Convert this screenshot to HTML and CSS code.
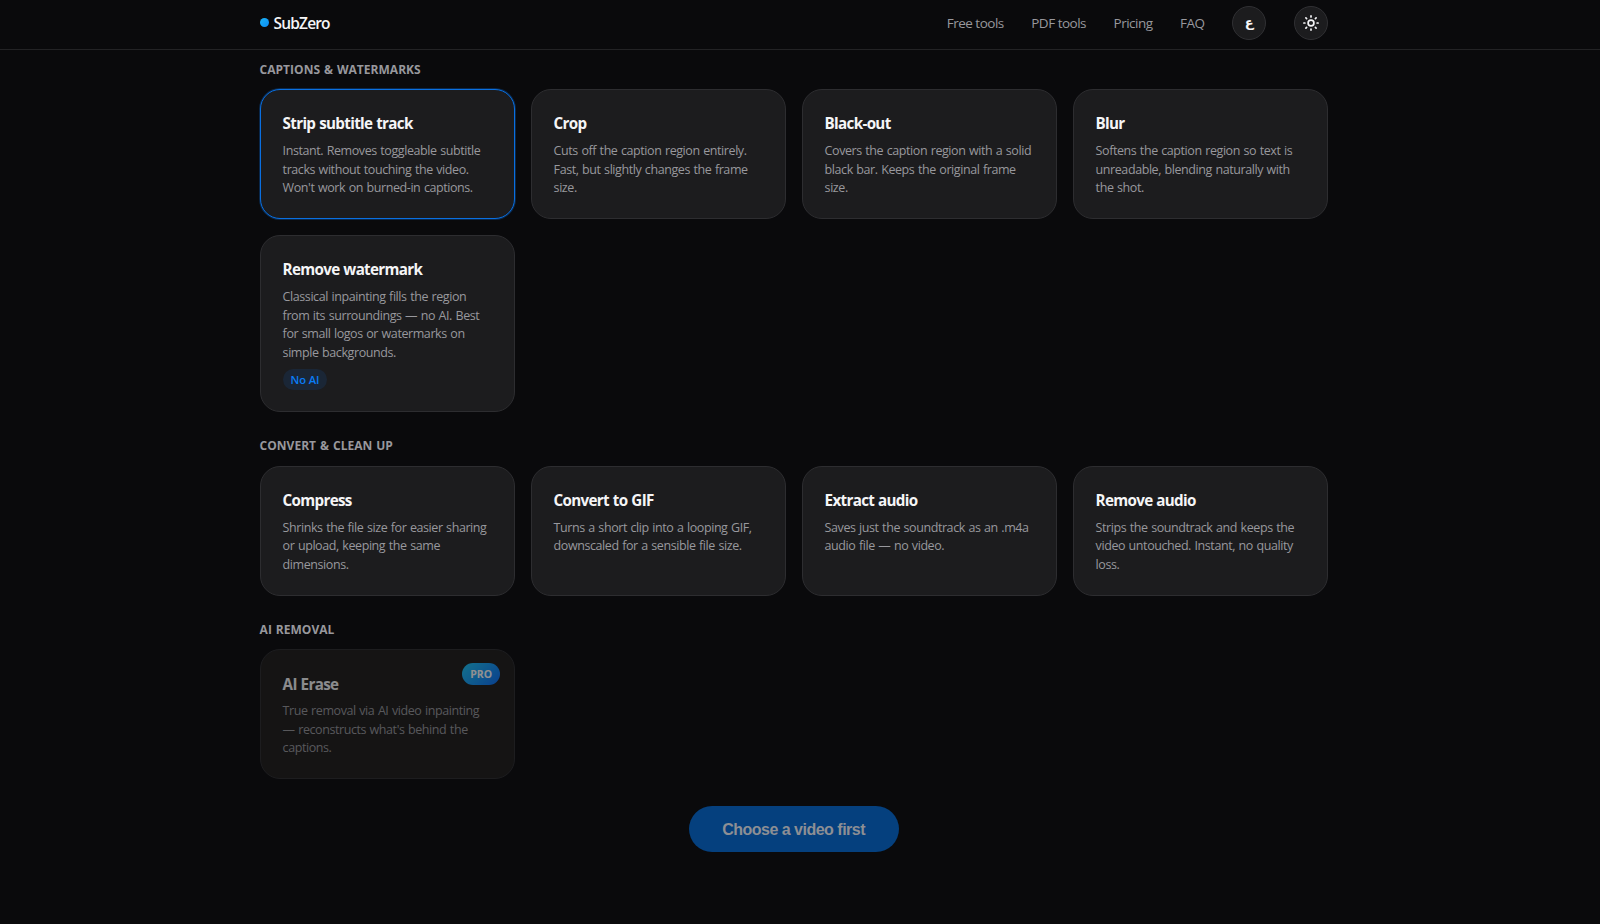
FILE: index.html
```html
<!DOCTYPE html>
<html lang="en">
<head>
<meta charset="utf-8">
<title>SubZero</title>
<link rel="stylesheet" href="styles.css">
</head>
<body>
<header class="header">
  <div class="header-inner">
    <a class="brand"><span class="brand-dot"></span><span class="brand-name">SubZero</span></a>
    <nav class="nav">
      <a>Free tools</a>
      <a>PDF tools</a>
      <a>Pricing</a>
      <a>FAQ</a>
      <button class="round lang" lang="ar">ع</button>
      <button class="round" aria-label="Theme">
        <svg width="16" height="16" viewBox="0 0 16 16" fill="none" stroke="#f5f5f7" stroke-width="1.7" stroke-linecap="round">
          <circle cx="8" cy="8" r="2.9"/>
          <path d="M8 .9v1M8 14.1v1M.9 8h1M14.1 8h1M2.9 2.9l.7.7M12.4 12.4l.7.7M2.9 13.1l.7-.7M12.4 3.6l.7-.7"/>
        </svg>
      </button>
    </nav>
  </div>
</header>
<main class="main">
  <h2 class="label">CAPTIONS &amp; WATERMARKS</h2>
  <div class="grid">
    <article class="card selected"><h3>Strip subtitle track</h3><p>Instant. Removes toggleable subtitle<br>tracks without touching the video.<br>Won't work on burned-in captions.</p></article>
    <article class="card"><h3>Crop</h3><p>Cuts off the caption region entirely.<br>Fast, but slightly changes the frame<br>size.</p></article>
    <article class="card"><h3>Black-out</h3><p>Covers the caption region with a solid<br>black bar. Keeps the original frame<br>size.</p></article>
    <article class="card"><h3>Blur</h3><p>Softens the caption region so text is<br>unreadable, blending naturally with<br>the shot.</p></article>
    <article class="card"><h3>Remove watermark</h3><p>Classical inpainting fills the region<br>from its surroundings — no AI. Best<br>for small logos or watermarks on<br>simple backgrounds.</p><span class="tag">No AI</span></article>
  </div>
  <h2 class="label">CONVERT &amp; CLEAN UP</h2>
  <div class="grid">
    <article class="card"><h3>Compress</h3><p>Shrinks the file size for easier sharing<br>or upload, keeping the same<br>dimensions.</p></article>
    <article class="card"><h3>Convert to GIF</h3><p>Turns a short clip into a looping GIF,<br>downscaled for a sensible file size.</p></article>
    <article class="card"><h3>Extract audio</h3><p>Saves just the soundtrack as an .m4a<br>audio file — no video.</p></article>
    <article class="card"><h3>Remove audio</h3><p>Strips the soundtrack and keeps the<br>video untouched. Instant, no quality<br>loss.</p></article>
  </div>
  <h2 class="label">AI REMOVAL</h2>
  <div class="grid">
    <article class="card disabled"><h3>AI Erase</h3><p>True removal via AI video inpainting<br>— reconstructs what's behind the<br>captions.</p><span class="pro">PRO</span></article>
  </div>
  <button class="cta" disabled>Choose a video first</button>
</main>
</body>
</html>
```
FILE: styles.css
```css
* { box-sizing: border-box; }
body {
  margin: 0;
  height: 924px;
  overflow: hidden;
  background: #0a0a0c;
  color: #f5f5f7;
  font-family: "Open Sans", "Noto Sans", sans-serif;
}
.header {
  height: 50px;
  padding-bottom: 4px;
  border-bottom: 1px solid #232325;
}
.header-inner, .main { width: 1068px; margin-left: 259.6px; }
.header-inner {
  height: 45px;
  display: flex;
  align-items: center;
  justify-content: space-between;
}
.brand { display: flex; align-items: center; gap: 5px; }
.brand-dot {
  width: 9px; height: 9px;
  border-radius: 50%;
  background: linear-gradient(135deg, #1cb4f4, #0a8cf8);
}
.brand-name { font-size: 15.5px; font-weight: 600; letter-spacing: -0.85px; }
.nav { display: flex; align-items: center; gap: 27.5px; font-size: 13.5px; letter-spacing: -0.5px; color: #98989d; }
.round {
  width: 34px; height: 34px;
  padding: 0;
  display: flex;
  align-items: center;
  justify-content: center;
  border: 1px solid #303033;
  border-radius: 50%;
  background: #1c1c1e;
  color: #f5f5f7;
}
.lang { font: 700 13px "DejaVu Sans", sans-serif; }
.main { display: flex; flex-direction: column; }
.label {
  margin: 26.2px 0 12.6px;
  font-size: 12px;
  line-height: 15px;
  font-weight: 700;
  letter-spacing: 0.02px;
  word-spacing: 0.8px;
  color: #98989d;
}
.label:first-child { margin: 12px 0; }
.grid { display: grid; grid-template-columns: repeat(4, 255px); gap: 16px; }
.card {
  position: relative;
  min-height: 130px;
  padding: 22.4px 22px 20px;
  border: 1px solid #2d2d30;
  border-radius: 20px;
  background: #1c1c1e;
  white-space: nowrap;
}
.card.selected { border-color: #0a6fe0; box-shadow: 0 0 0 1px rgba(10, 111, 224, 0.3); }
.card h3 { margin: 0 0 7.6px; font-size: 15.2px; line-height: 22px; font-weight: 700; letter-spacing: -0.68px; word-spacing: 0.6px; }
.card p { margin: 0; font-size: 12.5px; line-height: 18.6px; letter-spacing: -0.42px; word-spacing: 0.7px; color: #98989d; }
.card.disabled { opacity: 0.55; background: #1e1d1c; }
.tag {
  display: inline-block;
  margin: 6.4px 0 1px;
  padding: 0 8px;
  border-radius: 11px;
  background: #1a2636;
  color: #0a7cf4;
  font-size: 11.2px;
  line-height: 21px;
  font-weight: 600;
  letter-spacing: -0.1px;
  vertical-align: top;
}
.pro {
  position: absolute;
  top: 13px; right: 13.5px;
  padding: 0 8px;
  border-radius: 11px;
  background: linear-gradient(135deg, #1cc8f8, #0a6cf8);
  color: #fff;
  font-size: 10.5px;
  line-height: 22px;
  font-weight: 700;
}
.cta {
  align-self: center;
  width: 210px; height: 46px;
  margin-top: 27px;
  padding-top: 2px;
  border: 0;
  border-radius: 23px;
  background: #05407e;
  color: #8d8f94;
  font: 700 16px "Liberation Sans", sans-serif;
  letter-spacing: -0.5px;
}
```
